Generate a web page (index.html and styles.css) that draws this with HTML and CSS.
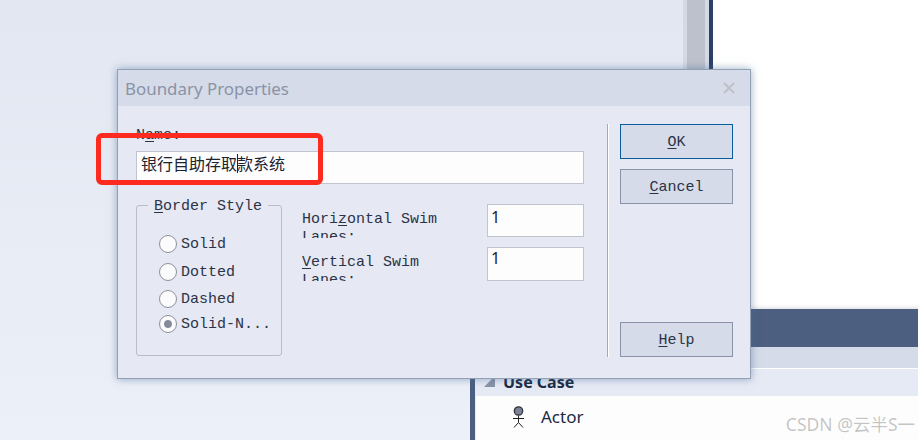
FILE: index.html
```html
<!DOCTYPE html>
<html lang="zh-CN">
  <head>
    <meta charset="utf-8" />
    <title>Boundary Properties</title>
    <link rel="stylesheet" href="styles.css">
  </head>
  <body>
    <div class="top">
      <div class="left-pane"></div>
      <div class="scrollbar"><div class="thumb"></div></div>
      <div class="edge"></div>
      <div class="canvas"></div>
    </div>
    <div class="bottom">
      <div class="toolbox">
        <div class="toolbox-title"></div>
        <div class="toolbox-tabs"></div>
        <div class="toolbox-head"><span class="arrow"></span><b>Use Case</b></div>
        <div class="toolbox-item">
          <svg class="actor" width="13" height="22" viewBox="0 0 13 22">
            <circle cx="6.5" cy="5" r="4.2" fill="#7d8296" stroke="#33333d" stroke-width="1.3"/>
            <path d="M6.5 9.5V16.5M1 12.5H12M6.5 16.5L2 21.5M6.5 16.5L11 21.5" fill="none" stroke="#222" stroke-width="1"/>
          </svg>
          <span>Actor</span>
        </div>
      </div>
    </div>

    <div class="dialog">
      <div class="dialog-title">
        <span>Boundary Properties</span>
        <svg class="close" width="14" height="14" viewBox="0 0 14 14">
          <path d="M2 2L12 12M12 2L2 12" stroke="#bfc1c6" stroke-width="2"/>
        </svg>
      </div>
      <div class="dialog-body">
        <div class="form">
          <label class="name-label">N<u>a</u>me:</label>
          <div class="name-input"><span>银行自助存取</span><i class="caret"></i><span>款系统</span></div>
          <div class="form-row">
            <fieldset class="group">
              <legend><u>B</u>order Style</legend>
              <label class="radio"><input type="radio" name="border">Solid</label>
              <label class="radio"><input type="radio" name="border">Dotted</label>
              <label class="radio"><input type="radio" name="border">Dashed</label>
              <label class="radio"><input type="radio" name="border" checked>Solid-N...</label>
            </fieldset>
            <div class="swim">
              <label class="swim-label">Hori<u>z</u>ontal Swim Lanes:</label>
              <input class="swim-input" type="text" value="1">
              <label class="swim-label second"><u>V</u>ertical Swim Lanes:</label>
              <input class="swim-input" type="text" value="1">
            </div>
          </div>
        </div>
        <div class="divider"></div>
        <div class="buttons">
          <button class="btn default"><u>O</u>K</button>
          <button class="btn"><u>C</u>ancel</button>
          <button class="btn help"><u>H</u>elp</button>
        </div>
      </div>
    </div>

    <div class="highlight"></div>
    <div class="watermark">CSDN @云半S一</div>
  </body>
</html>
```
FILE: styles.css
```css
html, body{
  margin: 0;
  height: 100%;
}
body{
  width: 918px;
  height: 440px;
  overflow: hidden;
  position: relative;
  background: linear-gradient(#e3e7f1, #ecf0f9);
  font-family: "Liberation Mono", monospace;
  font-size: 15px;
  color: #2b3347;
}
u{
  text-underline-offset: 2px;
}

/* background window */
.top{
  display: flex;
  height: 309px;
}
.left-pane{
  width: 683px;
}
.scrollbar{
  width: 26px;
  padding: 0 4px;
  box-sizing: border-box;
  background: #d4d9e6;
}
.thumb{
  height: 100%;
  background: #bcc1cb;
}
.edge{
  width: 4px;
  background: #2c4066;
}
.canvas{
  flex: 1;
  background: #fff;
  box-shadow: inset 0 -4px 4px -3px rgba(0,0,0,.15);
}
.bottom{
  height: 131px;
  padding-left: 470px;
}
.toolbox{
  height: 100%;
  border-left: 5px solid #4d5f80;
  background: #e6eaf5;
}
.toolbox-title{
  height: 38px;
  background: #4d5f80;
}
.toolbox-tabs{
  height: 21px;
  background: #d5dbe8;
  border-bottom: 1px solid #fff;
}
.toolbox-head{
  height: 27px;
  display: flex;
  align-items: center;
  gap: 8px;
  padding: 0 0 2px 9px;
  box-sizing: border-box;
  background: #e6eaf5;
  font-family: "Noto Sans", sans-serif;
  font-size: 16px;
  color: #1b2a44;
}
.arrow{
  width: 0;
  height: 0;
  border-left: 11px solid transparent;
  border-bottom: 11px solid #8a93a6;
}
.toolbox-item{
  display: flex;
  align-items: center;
  gap: 16px;
  height: 44px;
  margin-left: 1px;
  padding-left: 36px;
  background: #fdfdfd;
  font-family: "Noto Sans", sans-serif;
  font-size: 17px;
  color: #1b2a44;
}
.toolbox-item span{
  margin-top: -4px;
}
.actor{
  margin-top: -3px;
}

/* dialog */
.dialog{
  position: absolute;
  left: 117px;
  top: 69px;
  width: 634px;
  height: 310px;
  box-sizing: border-box;
  border: 1px solid #93a1b5;
  background: #e6e9f4;
  box-shadow: 0 0 8px rgba(70,105,150,.55);
}
.dialog-title{
  display: flex;
  align-items: center;
  justify-content: space-between;
  height: 36px;
  padding: 0 14px 0 7px;
  background: #d5dbe8;
  font-family: "Noto Sans", sans-serif;
  font-size: 16.9px;
  color: #8a93a6;
}
.dialog-body{
  display: flex;
  height: 233px;
  padding: 18px 17px 0 18px;
}
.form{
  width: 448px;
}
.name-label{
  display: block;
  height: 25px;
  padding-top: 2px;
  line-height: 20px;
}
.name-input{
  display: flex;
  align-items: center;
  height: 33px;
  box-sizing: border-box;
  padding: 0 0 9px 4px;
  border: 1px solid #c0c4cf;
  background: #fdfdfd;
  font-family: "Noto Sans CJK SC", sans-serif;
  font-size: 16px;
  color: #1c2230;
}
.caret{
  width: 1px;
  height: 19px;
  margin-right: -1px;
  background: #222;
}
.form-row{
  display: flex;
  margin-top: 12px;
}
.group{
  flex: none;
  width: 146px;
  min-width: 0;
  height: 162px;
  box-sizing: border-box;
  margin: -2px 0 0;
  padding: 19px 0 0 22px;
  border: 1px solid #b9bdc9;
  border-radius: 3px;
}
.group legend{
  margin-left: -11px;
  padding: 4px 6px 0;
  line-height: 18px;
  white-space: nowrap;
}
.radio{
  display: flex;
  align-items: center;
  gap: 4px;
  height: 18px;
  margin-bottom: 10px;
  white-space: nowrap;
}
.radio:nth-of-type(2){
  margin-bottom: 9px;
}
.radio:nth-of-type(3){
  margin-bottom: 7px;
}
.radio input{
  appearance: none;
  flex: none;
  width: 18px;
  height: 18px;
  margin: 0;
  border: 1px solid #8d919b;
  border-radius: 50%;
  background: #fbfbfd;
}
.radio input:checked{
  background: radial-gradient(circle, #858b99 0 3.5px, #fbfbfd 4.5px);
}
.swim{
  display: grid;
  grid-template-columns: 165px 97px;
  column-gap: 20px;
  align-content: start;
  margin: 8px 0 0 20px;
}
.swim-label{
  height: 29px;
  margin-top: 5px;
  padding-top: 2px;
  box-sizing: border-box;
  line-height: 18px;
  overflow: hidden;
}
.swim-label.second{
  margin-top: 14px;
}
.swim-input{
  width: 97px;
  height: 33px;
  box-sizing: border-box;
  margin: 0;
  padding: 0 3px 8px;
  border: 1px solid #c0c4cf;
  background: #fdfdfd;
  font-family: "Noto Sans", sans-serif;
  font-size: 16px;
  color: #1c2230;
}
.swim-input:last-child{
  height: 34px;
  margin-top: 9px;
  padding-bottom: 12px;
}
.divider{
  width: 1px;
  height: 233px;
  margin-left: 23px;
  background: #a9a9a9;
  border-right: 1px solid #fff;
}
.buttons{
  display: flex;
  flex-direction: column;
  gap: 10px;
  width: 113px;
  margin-left: 11px;
}
.btn{
  height: 35px;
  padding: 1px 0 0;
  border: 1px solid #8a93a8;
  background: #d5dbe8;
  font-family: inherit;
  font-size: 15px;
  color: #2b3347;
}
.btn.default{
  border-color: #0a5c9c;
}
.btn.help{
  margin-top: auto;
}

/* annotation drawn over the screenshot */
.highlight{
  position: absolute;
  left: 96px;
  top: 133px;
  width: 227px;
  height: 52px;
  box-sizing: border-box;
  border: 5px solid #fc2a1f;
  border-radius: 6px;
}
.watermark{
  position: absolute;
  right: 3px;
  bottom: 4px;
  font-family: "Noto Sans", "Noto Sans CJK SC", sans-serif;
  font-size: 17.5px;
  color: rgba(90,90,90,.35);
}
```
